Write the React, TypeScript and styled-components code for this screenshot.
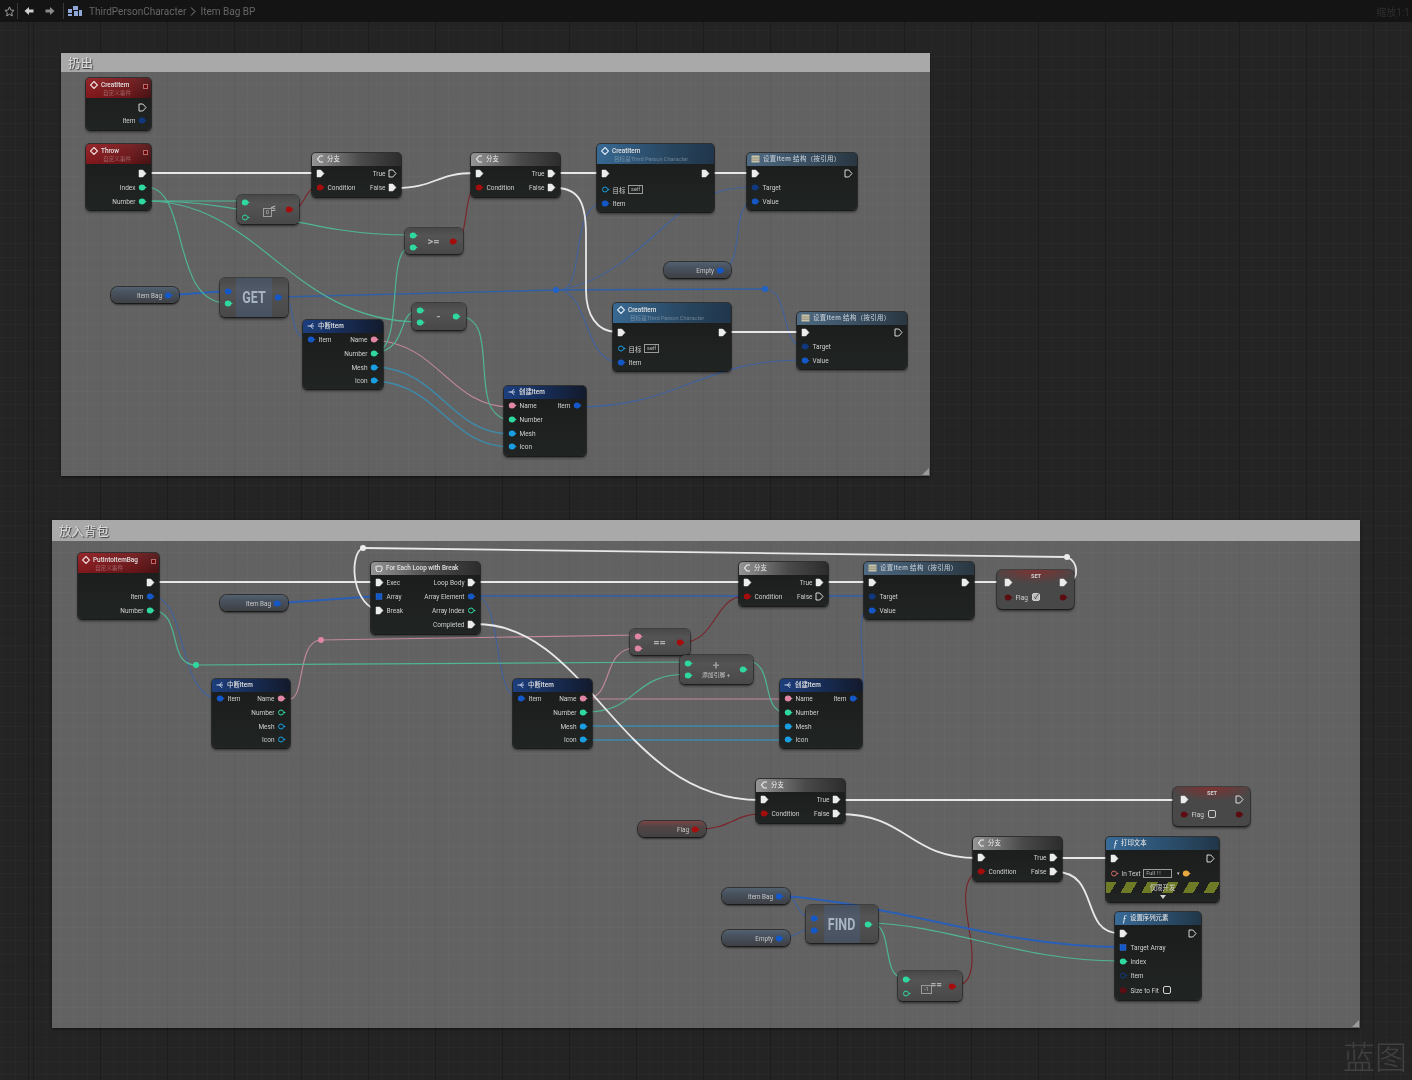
import React from 'react';
import styled, { createGlobalStyle, css } from 'styled-components';

const TOP = 22;
const FONT = `Roboto, "Noto Sans CJK SC", sans-serif`;

const GlobalStyle = createGlobalStyle`
  html, body { margin: 0; padding: 0; background: #222; }
  body { font-family: ${FONT}; overflow: hidden; }
`;

/* ---------- page shell ---------- */
const Page = styled.div`
  display: flex;
  flex-direction: column;
  width: 1412px;
  height: 1080px;
  filter: blur(0.5px);
`;
const Toolbar = styled.header`
  display: flex;
  align-items: center;
  height: 22px;
  flex: none;
  padding: 0 0 0 4px;
  background: #141414;
  color: #666;
  font-size: 10px;
`;
const Slot = styled.span<{ $ml: number }>`
  display: flex;
  align-items: center;
  gap: 4px;
  margin-left: ${p => p.$ml}px;
`;
const ToolDivider = styled.span`
  width: 1px;
  height: 16px;
  background: #3a3a3a;
`;
const ZoomLabel = styled.span`
  margin-left: auto;
  margin-right: 2px;
  font-size: 10px;
  color: #2e2e2e;
`;
const Canvas = styled.main`
  position: relative;
  flex: 1;
  overflow: hidden;
  background-color: #242424;
  background-image:
    repeating-linear-gradient(90deg, rgba(0, 0, 0, 0.3) 0 1px, transparent 1px 67px),
    repeating-linear-gradient(0deg, rgba(0, 0, 0, 0.16) 0 1px, transparent 1px 67px),
    repeating-linear-gradient(90deg, rgba(255, 255, 255, 0.02) 0 1px, transparent 1px 13.4px),
    repeating-linear-gradient(0deg, rgba(255, 255, 255, 0.02) 0 1px, transparent 1px 13.4px);
  background-position: 33px 0, 0 22px, 33px 0, 0 22px;
`;
const Watermark = styled.div`
  position: absolute;
  right: 5px;
  bottom: 2px;
  font-size: 32px;
  font-weight: 300;
  color: rgba(255, 255, 255, 0.13);
  font-family: "Noto Sans CJK SC", sans-serif;
`;

/* ---------- comment boxes ---------- */
const Comment = styled.section<{ $x: number; $y: number; $w: number; $h: number }>`
  position: absolute;
  left: ${p => p.$x}px;
  top: ${p => p.$y - TOP}px;
  width: ${p => p.$w}px;
  height: ${p => p.$h}px;
  background: rgba(255, 255, 255, 0.285);
  box-shadow: 0 1px 3px rgba(0, 0, 0, 0.55);
`;
const CommentTitle = styled.h2<{ $h: number }>`
  margin: 0;
  height: ${p => p.$h}px;
  line-height: ${p => p.$h + 2}px;
  padding-left: 7px;
  background: #a9a9a9;
  color: #dcdcdc;
  font-size: 12.5px;
  font-weight: 400;
  text-shadow: 1px 1px 1px #3a3a3a;
`;
const Grip = styled.svg`
  position: absolute;
  right: 1px;
  bottom: 1px;
`;

/* ---------- wires ---------- */
const WireLayer = styled.svg`
  position: absolute;
  left: 0;
  top: 0;
`;

/* ---------- full nodes ---------- */
const Node = styled.article<{ $x: number; $y: number; $w: number; $h: number }>`
  position: absolute;
  left: ${p => p.$x}px;
  top: ${p => p.$y - TOP}px;
  width: ${p => p.$w}px;
  height: ${p => p.$h}px;
  box-sizing: border-box;
  display: flex;
  flex-direction: column;
  border-radius: 4px;
  background: linear-gradient(#1a1c1b, #202423);
  box-shadow: 0 0 0 1px rgba(0, 0, 0, 0.5), 0 2px 3px rgba(0, 0, 0, 0.55);
  color: #cfcfcf;
  font-size: 6.5px;
  overflow: hidden;
`;
type Tone = 'event' | 'branch' | 'func' | 'struct' | 'set' | 'print';
const toneBg: Record<Tone, ReturnType<typeof css>> = {
  event: css`background: linear-gradient(rgba(255, 255, 255, 0.06), rgba(0, 0, 0, 0.1)), linear-gradient(90deg, #8f1a1f, #6f171a 70%, #4e1416);`,
  branch: css`background: linear-gradient(90deg, #959595, #4a4a4a 55%, #2c2c2c);`,
  func: css`background: linear-gradient(100deg, #386a94, #284660 60%, #20354a);`,
  struct: css`background: linear-gradient(90deg, #1d3f7e, #152545 70%, #131a2c);`,
  set: css`background: linear-gradient(90deg, #4f6a82, #344757 70%, #293640);`,
  print: css`background: linear-gradient(90deg, #386b98, #2a4c68 60%, #213648);`,
};
const Header = styled.div<{ $tone: Tone; $h: number }>`
  position: relative;
  flex: none;
  height: ${p => p.$h}px;
  display: flex;
  align-items: flex-start;
  gap: 3px;
  padding: ${p => (p.$h > 15 ? 3 : 2)}px 4px 0;
  box-sizing: border-box;
  ${p => toneBg[p.$tone]}
`;
const HeaderText = styled.div`
  display: flex;
  flex-direction: column;
  gap: 1px;
  min-width: 0;
`;
const Title = styled.span<{ $dim?: boolean }>`
  font-size: 6.4px;
  line-height: 8px;
  font-weight: 500;
  letter-spacing: ${p => (p.$dim ? 0.4 : 0)}px;
  color: ${p => (p.$dim ? '#bcc6cf' : '#e0e0e0')};
  white-space: nowrap;
`;
const Subtitle = styled.span`
  font-size: 5.6px;
  line-height: 7px;
  color: rgba(255, 255, 255, 0.3);
  white-space: nowrap;
  padding-left: 2px;
`;
const Delegate = styled.i`
  position: absolute;
  right: 3px;
  top: 6px;
  width: 3px;
  height: 3px;
  border: 1px solid #b86a6a;
  background: #6a0808;
`;
const Body = styled.div<{ $pad: number }>`
  display: flex;
  flex-direction: column;
  padding-top: ${p => p.$pad}px;
`;
const Row = styled.div<{ $h: number }>`
  display: flex;
  justify-content: space-between;
  align-items: center;
  height: ${p => p.$h}px;
  padding: 0 4px;
  white-space: nowrap;
`;
const Cell = styled.div`
  display: flex;
  align-items: center;
  gap: 2.5px;
`;
const Label = styled.span`
  padding-top: 1px;
`;
const Literal = styled.span<{ $w?: number }>`
  border: 1px solid #9a9a9a;
  padding: 0 2px;
  min-width: ${p => p.$w ?? 0}px;
  font-size: 5.6px;
  line-height: 7px;
  color: #b8b8b8;
`;
const Caret = styled.span`
  font-size: 5px;
  margin-left: 2px;
  color: #ccc;
`;
const Check = styled.span<{ $on?: boolean }>`
  display: inline-flex;
  align-items: center;
  justify-content: center;
  box-sizing: border-box;
  width: 8px;
  height: 8px;
  margin-left: 2px;
  border: 1px solid #d0d0d0;
  border-radius: 2px;
  font-size: 7px;
  line-height: 1;
  color: #333;
  background: ${p => (p.$on ? '#bdbdbd' : 'transparent')};
`;
const DevBand = styled.div`
  display: flex;
  align-items: center;
  justify-content: center;
  height: 11px;
  margin-top: 2px;
  color: #d0d0d0;
  font-size: 6.4px;
  background: repeating-linear-gradient(120deg, #6f7a26 0 9px, #1d201e 9px 18px);
`;
const DevArrow = styled.div`
  width: 0;
  height: 0;
  margin: 2px auto 0;
  border: 3px solid transparent;
  border-top: 4px solid #d0d0d0;
  border-bottom: 0;
`;

/* ---------- compact (pure) nodes ---------- */
const Compact = styled.article<{ $x: number; $y: number; $w: number; $h: number }>`
  position: absolute;
  left: ${p => p.$x}px;
  top: ${p => p.$y - TOP}px;
  width: ${p => p.$w}px;
  height: ${p => p.$h}px;
  box-sizing: border-box;
  display: flex;
  align-items: center;
  justify-content: space-between;
  padding: 0 5px 0 4px;
  border-radius: 5px;
  background: linear-gradient(#484848, #545454 30%, #484848);
  box-shadow: 0 0 0 1px rgba(0, 0, 0, 0.35), 0 2px 3px rgba(0, 0, 0, 0.6);
  color: #c8c8c8;
  overflow: hidden;
`;
const PinColumn = styled.div<{ $gap?: number }>`
  display: flex;
  flex-direction: column;
  gap: ${p => p.$gap ?? 3}px;
`;
const Center = styled.div`
  flex: 1;
  display: flex;
  flex-direction: column;
  align-items: center;
  justify-content: center;
  min-width: 0;
  height: 100%;
`;
const Glyph = styled.span<{ $size?: number }>`
  font-size: ${p => p.$size ?? 11}px;
  line-height: 1;
  font-weight: 700;
  color: #b0b0b0;
`;
const Mega = styled.span`
  display: flex;
  align-items: center;
  justify-content: center;
  width: 36px;
  height: 100%;
  background: rgba(70, 110, 165, 0.26);
`;
const MegaText = styled.span`
  display: inline-block;
  font-size: 16px;
  font-weight: 700;
  color: #a8b4c2;
  transform: scaleX(0.78);
`;
const LiteralGlyph = styled.div`
  display: flex;
  align-items: flex-start;
  padding-left: 4px;
`;
const LiteralLow = styled(Literal)`
  margin-top: 6px;
`;
const GlyphHigh = styled(Glyph)`
  margin-left: -1px;
  margin-top: 1px;
`;
const SmallCaption = styled.span`
  font-size: 5.8px;
  line-height: 8px;
  color: #c4c4c4;
  white-space: nowrap;
`;
const Plus = styled.span`
  font-size: 12px;
  line-height: 10px;
  font-weight: 700;
  color: #9a9a9a;
`;

/* ---------- SET node ---------- */
const SetNode = styled.article<{ $x: number; $y: number; $w: number; $h: number }>`
  position: absolute;
  left: ${p => p.$x}px;
  top: ${p => p.$y - TOP}px;
  width: ${p => p.$w}px;
  height: ${p => p.$h}px;
  box-sizing: border-box;
  display: flex;
  flex-direction: column;
  gap: 3px;
  padding: 6px 6px 0 7px;
  border-radius: 5px;
  background: radial-gradient(ellipse 60% 14px at 50% 0, rgba(150, 40, 40, 0.7), transparent), #484848;
  box-shadow: 0 0 0 1px rgba(0, 0, 0, 0.35), 0 2px 3px rgba(0, 0, 0, 0.6);
  color: #d0d0d0;
  font-size: 6.5px;
`;
const SetRow = styled.div`
  display: flex;
  align-items: center;
  justify-content: space-between;
  height: 12px;
`;
const SetLabel = styled.span`
  align-self: flex-start;
  margin-top: -3px;
  font-size: 5.6px;
  font-weight: 700;
`;

/* ---------- variable pills ---------- */
const VarPill = styled.article<{ $x: number; $y: number; $w: number; $red?: boolean }>`
  position: absolute;
  left: ${p => p.$x}px;
  top: ${p => p.$y - TOP}px;
  width: ${p => p.$w}px;
  height: 16px;
  box-sizing: border-box;
  display: flex;
  align-items: center;
  justify-content: flex-end;
  gap: 2px;
  padding-right: 6px;
  border-radius: 7px;
  background: ${p =>
    p.$red
      ? 'linear-gradient(#7c4444, #524545 35%, #414141)'
      : 'linear-gradient(#52606f, #48525e 35%, #3e4044)'};
  box-shadow: 0 0 0 1px rgba(0, 0, 0, 0.5), 0 2px 2px rgba(0, 0, 0, 0.5);
  color: #c8c8c8;
  font-size: 6.3px;
`;

/* ---------- icons ---------- */
type PinSpec = { k?: 'exec' | 'data' | 'array'; c?: string; o?: boolean };
const C = {
  white: '#ececec',
  bool: '#a50d0d',
  int: '#2fd8a0',
  name: '#df86a6',
  obj: '#199ee2',
  item: '#1458c8',
  itemDark: '#10387f',
  boolDark: '#5c0d12',
  orange: '#e8a840',
};
const PinBox = styled.svg`
  flex: none;
  display: block;
`;
function Pin({ k = 'data', c = C.item, o }: PinSpec) {
  if (k === 'exec')
    return (
      <PinBox width="9" height="9" viewBox="0 0 9 9">
        <path
          d="M1 1 H4.8 L8 4.5 L4.8 8 H1 Z"
          fill={o ? 'none' : C.white}
          stroke={C.white}
          strokeWidth={o ? 0.9 : 0.5}
          strokeLinejoin="round"
        />
      </PinBox>
    );
  if (k === 'array')
    return (
      <PinBox width="9" height="9" viewBox="0 0 9 9">
        <rect x="1" y="1.5" width="6" height="6" fill={c} stroke="#3a74d8" strokeWidth="0.4" />
      </PinBox>
    );
  return (
    <PinBox width="9" height="9" viewBox="0 0 9 9">
      {o ? (
        <circle cx="4" cy="4.5" r="2.5" fill="none" stroke={c} strokeWidth="1" />
      ) : (
        <ellipse cx="4" cy="4.5" rx="3.2" ry="2.9" fill={c} />
      )}
      <path d="M7 3.4 L8.8 4.5 L7 5.6 Z" fill={c} />
    </PinBox>
  );
}
function HeadIcon({ tone }: { tone: Tone }) {
  if (tone === 'event')
    return (
      <PinBox width="8" height="8" viewBox="0 0 8 8">
        <path d="M4 0.5 L7.5 4 L4 7.5 L0.5 4 Z" fill="none" stroke="#f0e0e0" strokeWidth="1.1" />
      </PinBox>
    );
  if (tone === 'func')
    return (
      <PinBox width="8" height="8" viewBox="0 0 8 8">
        <path d="M4 0.5 L7.5 4 L4 7.5 L0.5 4 Z" fill="none" stroke="#e0e8f0" strokeWidth="1.1" />
      </PinBox>
    );
  if (tone === 'branch')
    return (
      <PinBox width="8" height="8" viewBox="0 0 8 8">
        <path d="M7 1 H4 L1.5 4 L4 7 H7" fill="none" stroke="#f0f0f0" strokeWidth="1.1" />
      </PinBox>
    );
  if (tone === 'struct')
    return (
      <PinBox width="8" height="8" viewBox="0 0 8 8">
        <path d="M0.5 4 H3.5 M3.5 4 L6 1.2 M3.5 4 H7 M3.5 4 L6 6.8" fill="none" stroke="#dfe6f5" strokeWidth="0.9" />
      </PinBox>
    );
  if (tone === 'set')
    return (
      <PinBox width="9" height="8" viewBox="0 0 9 8">
        <rect x="0.5" y="0.5" width="8" height="7" fill="#c8c4aa" />
        <path d="M0.5 3 H8.5 M0.5 5.2 H8.5" stroke="#6b6a5c" strokeWidth="0.6" />
      </PinBox>
    );
  return null;
}
const FuncMark = styled.span`
  padding-left: 3px;
  font-family: "Liberation Serif", serif;
  font-style: italic;
  font-size: 10px;
  line-height: 9px;
  color: #e8eef5;
`;
function LoopIcon() {
  return (
    <PinBox width="8" height="8" viewBox="0 0 8 8">
      <path d="M1.5 2.2 H6.5 A1 1 0 0 1 7 3 V5 A2.6 2.6 0 0 1 1 5 V2.2" fill="none" stroke="#f0f0f0" strokeWidth="1" />
    </PinBox>
  );
}

/* ---------- data ---------- */
const ex: PinSpec = { k: 'exec' };
const exO: PinSpec = { k: 'exec', o: true };
const d = (c: string, o?: boolean): PinSpec => ({ c, o });
type CellDef = { pin?: PinSpec; label?: string; lit?: string; litW?: number; caret?: boolean; after?: PinSpec; check?: 'on' | 'off' };
type RowDef = { l?: CellDef; r?: CellDef; h?: number };
type NodeDef = {
  x: number; y: number; w: number; h: number;
  tone: Tone; title: string; sub?: string; rows: RowDef[]; rowH?: number;
  pad?: number; head?: number; dev?: boolean; delegate?: boolean;
};

const breakRows = (hollow: boolean): RowDef[] => [
  { l: { pin: d(C.item), label: 'Item' }, r: { label: 'Name', pin: d(C.name) } },
  { r: { label: 'Number', pin: d(C.int, hollow) } },
  { r: { label: 'Mesh', pin: d(C.obj, hollow) } },
  { r: { label: 'Icon', pin: d(C.obj, hollow) } },
];
const makeRows: RowDef[] = [
  { l: { pin: d(C.name), label: 'Name' }, r: { label: 'Item', pin: d(C.item) } },
  { l: { pin: d(C.int), label: 'Number' } },
  { l: { pin: d(C.obj), label: 'Mesh' } },
  { l: { pin: d(C.obj), label: 'Icon' } },
];
const branch = (x: number, y: number, tO: boolean, fO: boolean): NodeDef => ({
  x, y, w: 89, h: 44, tone: 'branch', title: '分支',
  rows: [
    { l: { pin: ex }, r: { label: 'True', pin: tO ? exO : ex } },
    { l: { pin: d(C.bool), label: 'Condition' }, r: { label: 'False', pin: fO ? exO : ex } },
  ],
});
const setItem = (x: number, y: number, out: PinSpec): NodeDef => ({
  x, y, w: 110, h: 57, tone: 'set', title: '设置Item 结构（按引用）',
  rows: [
    { l: { pin: ex }, r: { pin: out } },
    { l: { pin: d(C.itemDark), label: 'Target' } },
    { l: { pin: d(C.item), label: 'Value' } },
  ],
});
const creatFn = (x: number, y: number, w: number): NodeDef => ({
  x, y, w, h: 68, tone: 'func', title: 'CreatItem', sub: '目标是Third Person Character', pad: 2, head: 20,
  rows: [
    { l: { pin: ex }, r: { pin: ex } },
    { h: 18, l: { pin: d(C.obj, true), label: '目标', lit: 'self' } },
    { h: 10, l: { pin: d(C.item), label: 'Item' } },
  ],
});

const NODES: NodeDef[] = [
  { x: 86, y: 78, w: 65, h: 52, tone: 'event', title: 'CreatItem', sub: '自定义事件', head: 20, pad: 2, delegate: true,
    rows: [{ r: { pin: exO } }, { h: 13, r: { label: 'Item', pin: d(C.itemDark) } }] },
  { x: 86, y: 144, w: 65, h: 66, tone: 'event', title: 'Throw', sub: '自定义事件', head: 20, pad: 2, delegate: true,
    rows: [{ r: { pin: ex } }, { r: { label: 'Index', pin: d(C.int) } }, { r: { label: 'Number', pin: d(C.int) } }] },
  branch(312, 153, true, false),
  branch(471, 153, false, false),
  creatFn(597, 144, 117),
  setItem(747, 153, exO),
  creatFn(613, 303, 118),
  setItem(797, 312, exO),
  { x: 303, y: 320, w: 80, h: 69, tone: 'struct', title: '中断Item', rows: breakRows(false), rowH: 13.7 },
  { x: 504, y: 386, w: 82, h: 70, tone: 'struct', title: '创建Item', rows: makeRows, rowH: 13.7 },

  { x: 78, y: 553, w: 81, h: 66, tone: 'event', title: 'PutIntoItemBag', sub: '自定义事件', head: 20, pad: 2, delegate: true,
    rows: [{ r: { pin: ex } }, { r: { label: 'Item', pin: d(C.item) } }, { r: { label: 'Number', pin: d(C.int) } }] },
  { x: 371, y: 562, w: 109, h: 72, tone: 'branch', title: 'For Each Loop with Break',
    rows: [
      { l: { pin: ex, label: 'Exec' }, r: { label: 'Loop Body', pin: ex } },
      { l: { pin: { k: 'array', c: C.item }, label: 'Array' }, r: { label: 'Array Element', pin: d(C.item) } },
      { l: { pin: ex, label: 'Break' }, r: { label: 'Array Index', pin: d(C.int, true) } },
      { r: { label: 'Completed', pin: ex } },
    ] },
  { x: 212, y: 679, w: 78, h: 69, tone: 'struct', title: '中断Item', rows: breakRows(true), rowH: 13.7 },
  { x: 513, y: 679, w: 79, h: 69, tone: 'struct', title: '中断Item', rows: breakRows(false), rowH: 13.7 },
  { x: 780, y: 679, w: 82, h: 69, tone: 'struct', title: '创建Item', rows: makeRows, rowH: 13.7 },
  branch(739, 562, false, true),
  setItem(864, 562, ex),
  branch(756, 779, false, false),
  branch(973, 837, false, false),
  { x: 1106, y: 837, w: 113, h: 65, tone: 'print', title: '打印文本', dev: true,
    rows: [
      { h: 16, l: { pin: ex }, r: { pin: exO } },
      { l: { pin: d('#c96a6a', true), label: 'In Text', lit: 'Full ! !', litW: 23, caret: true, after: d(C.orange) } },
    ] },
  { x: 1115, y: 912, w: 86, h: 88, tone: 'print', title: '设置序列元素', pad: 1,
    rows: [
      { l: { pin: ex }, r: { pin: exO } },
      { l: { pin: { k: 'array', c: C.item }, label: 'Target Array' } },
      { l: { pin: d(C.int), label: 'Index' } },
      { l: { pin: d(C.itemDark, true), label: 'Item' } },
      { h: 16, l: { pin: d(C.boolDark), label: 'Size to Fit', check: 'off' } },
    ] },
];

const VARS = [
  { x: 664, y: 262, w: 67, label: 'Empty', c: C.item },
  { x: 111, y: 287, w: 68, label: 'Item Bag', c: C.item },
  { x: 220, y: 595, w: 68, label: 'Item Bag', c: C.item },
  { x: 638, y: 821, w: 68, label: 'Flag', c: C.bool, red: true },
  { x: 722, y: 888, w: 68, label: 'Item Bag', c: C.item },
  { x: 722, y: 930, w: 68, label: 'Empty', c: C.item },
];

const SETS = [
  { x: 997, y: 570, w: 77, h: 39, on: true, out: ex },
  { x: 1173, y: 787, w: 77, h: 39, on: false, out: exO },
];

/* ---------- wire helpers ---------- */
const b = (x1: number, y1: number, x2: number, y2: number, t?: number) => {
  const k = t ?? Math.max(Math.abs(x2 - x1) * 0.5, 14);
  return `M${x1} ${y1} C${x1 + k} ${y1} ${x2 - k} ${y2} ${x2} ${y2}`;
};
const WHITE = [
  `M147 173 L316 173`,
  b(396, 188, 475, 173),
  `M555 173 L601 173`,
  `M709 173 L751 173`,
  `M556 188 C580 188 586 205 586 235 L586 290 C586 315 597 332 617 332`,
  `M725 332 L801 332`,
  `M155 582 L375 582`,
  `M475 582 L743 582`,
  `M823 582 L868 582`,
  `M969 582 L1004 582`,
  `M1067 557 C1078 562 1080 578 1068 583`,
  `M1067 557 L363 548`,
  `M363 548 C350 552 350 600 376 610`,
  `M476 624 C590 624 620 800 760 800`,
  `M839 800 L1179 800`,
  b(839, 814, 977, 858),
  `M1056 858 L1110 858`,
  `M1056 872 C1100 872 1080 933 1119 933`,
];
const TEAL = [
  `M146 187 C190 187 170 303 227 303`,
  `M146 201 L243 201`,
  `M146 201 C260 201 290 322 421 322`,
  `M146 201 C260 201 300 235 411 235`,
  `M376 353 C405 345 385 247 411 247`,
  `M376 353 C410 348 395 310 421 310`,
  `M457 316 C490 316 480 360 487 395 C490 412 500 420 511 420`,
  `M150 610 C185 610 165 665 196 665`,
  `M196 665 L688 662`,
  `M585 712 C640 712 630 674 688 674`,
  `M747 661 C775 661 760 712 785 712`,
  `M870 923 C950 925 1020 961 1119 961`,
  `M870 923 C895 923 880 978 904 978`,
];
const PINK = [
  `M376 340 C440 345 450 407 511 407`,
  `M290 699 C305 699 297 640 321 640`,
  `M321 640 L638 635`,
  `M585 699 C615 699 600 648 636 648`,
  `M585 699 L785 699`,
];
const CYAN = [
  `M376 367 C440 370 450 434 511 434`,
  `M376 381 C440 385 450 447 511 447`,
  `M585 726 L785 726`,
  `M585 740 L785 740`,
];
const BLUE = [
  `M290 303 C293 320 295 335 304 338`,
  `M560 290 C620 280 660 225 690 205 C710 192 730 187 753 187`,
  `M562 290 C585 285 570 205 603 203`,
  `M562 290 C590 300 585 362 619 362`,
  `M722 270 C745 265 730 205 753 201`,
  `M765 289 C790 289 780 346 803 346`,
  `M577 407 C680 407 700 360 803 360`,
  `M150 596 C190 596 175 699 221 699`,
  `M474 596 C505 596 490 699 521 699`,
  `M855 699 C875 699 850 612 868 610`,
  `M784 896 C800 896 795 917 811 917`,
  `M782 938 C795 938 800 929 811 929`,
];
const BLUE_MID = [`M280 297 L556 290 L765 289`, `M474 596 L739 596`, `M828 596 L868 596`];
const BLUE_THICK = [`M172 295 L228 291`, `M280 603 L379 596`, `M784 896 C900 905 1000 947 1119 947`];
const RED = [
  `M292 209 C305 209 305 187 318 187`,
  `M455 241 C470 241 462 187 478 187`,
  `M684 642 C715 642 715 596 745 596`,
  `M699 829 C730 829 735 814 760 814`,
  `M954 986 C972 986 975 965 970 935 C966 910 960 880 977 872`,
];
const KNOTS = [
  { x: 556, y: 290, c: '#1f63c8' },
  { x: 765, y: 289, c: '#1f63c8' },
  { x: 363, y: 548, c: C.white },
  { x: 1067, y: 557, c: C.white },
  { x: 196, y: 665, c: C.int },
  { x: 321, y: 640, c: C.name },
];

function Wires() {
  const group = (paths: string[], color: string, width: number) => (
    <g fill="none" stroke={color} strokeWidth={width}>
      {paths.map(p => (
        <path key={p} d={p} />
      ))}
    </g>
  );
  return (
    <WireLayer width="1412" height="1058" viewBox={`0 ${TOP} 1412 1058`}>
      {group(RED, '#7a2229', 1.1)}
      {group(PINK, '#c4899f', 1.1)}
      {group(CYAN, '#3d8aab', 1.5)}
      {group(BLUE, '#3f629f', 1.1)}
      {group(BLUE_MID, '#2f5fa8', 1.4)}
      {group(BLUE_THICK, '#2a5fb8', 2)}
      {group(TEAL, '#4fb596', 1.2)}
      {group(WHITE, '#e8e8e8', 1.8)}
      {KNOTS.map(k => (
        <circle key={`${k.x}-${k.y}`} cx={k.x} cy={k.y} r="3" fill={k.c} />
      ))}
    </WireLayer>
  );
}

/* ---------- renderers ---------- */
function CellView({ c, right }: { c: CellDef; right?: boolean }) {
  return (
    <Cell>
      {!right && c.pin && <Pin {...c.pin} />}
      {c.label && <Label>{c.label}</Label>}
      {c.lit && <Literal $w={c.litW}>{c.lit}</Literal>}
      {c.caret && <Caret>▾</Caret>}
      {c.after && <Pin {...c.after} />}
      {c.check && <Check $on={c.check === 'on'} />}
      {right && c.pin && <Pin {...c.pin} />}
    </Cell>
  );
}
function FullNode({ n }: { n: NodeDef }) {
  const head = n.head ?? 13;
  return (
    <Node $x={n.x} $y={n.y} $w={n.w} $h={n.h}>
      <Header $tone={n.tone} $h={head}>
        {n.tone === 'print' ? (
          <FuncMark>ƒ</FuncMark>
        ) : n.title.startsWith('For Each') ? (
          <LoopIcon />
        ) : (
          <HeadIcon tone={n.tone} />
        )}
        <HeaderText>
          <Title $dim={n.tone === 'set'}>{n.title}</Title>
          {n.sub && <Subtitle>{n.sub}</Subtitle>}
        </HeaderText>
        {n.delegate && <Delegate />}
      </Header>
      <Body $pad={n.pad ?? 0}>
        {n.rows.map((r, i) => (
          <Row key={i} $h={r.h ?? n.rowH ?? 14}>
            <span>{r.l && <CellView c={r.l} />}</span>
            <span>{r.r && <CellView c={r.r} right />}</span>
          </Row>
        ))}
      </Body>
      {n.dev && (
        <>
          <DevBand>仅限开发</DevBand>
          <DevArrow />
        </>
      )}
    </Node>
  );
}

const Grips = () => (
  <Grip width="7" height="7" viewBox="0 0 7 7">
    <path d="M7 0 V7 H0 Z" fill="#9a9a9a" />
  </Grip>
);

export default function App() {
  return (
    <Page>
      <GlobalStyle />
      <Toolbar>
        <Slot $ml={0}>
          <PinBox width="11" height="11" viewBox="0 0 12 12">
            <path d="M6 1 L7.5 4.4 L11 4.8 L8.4 7.2 L9.1 10.8 L6 9 L2.9 10.8 L3.6 7.2 L1 4.8 L4.5 4.4 Z" fill="none" stroke="#a8a8a8" strokeWidth="1" />
          </PinBox>
        </Slot>
        <Slot $ml={2}><ToolDivider /></Slot>
        <Slot $ml={6}>
          <PinBox width="10" height="10" viewBox="0 0 10 10">
            <path d="M0.5 5 L5 1 V3.4 H9.5 V6.6 H5 V9 Z" fill="#d0d0d0" />
          </PinBox>
        </Slot>
        <Slot $ml={11}>
          <PinBox width="10" height="10" viewBox="0 0 10 10">
            <path d="M9.5 5 L5 1 V3.4 H0.5 V6.6 H5 V9 Z" fill="#8a8a8a" />
          </PinBox>
        </Slot>
        <Slot $ml={8}><ToolDivider /></Slot>
        <Slot $ml={4}>
          <PinBox width="14" height="11" viewBox="0 0 14 11">
            <path d="M5 0 H10 V4 H5 Z M0 3 H4 V7 H0 Z M6 5 H10 V10 H6 Z M11 4 H14 V10 H11 Z M0 8 H4 V10 H0 Z" fill="#8ea6d8" />
          </PinBox>
        </Slot>
        <Slot $ml={7}>
          <span>ThirdPersonCharacter</span>
          <PinBox width="6" height="9" viewBox="0 0 6 9">
            <path d="M1 0.5 L5 4.5 L1 8.5" fill="none" stroke="#8a8a8a" strokeWidth="1" />
          </PinBox>
          <span>Item Bag BP</span>
        </Slot>
        <ZoomLabel>缩放1:1</ZoomLabel>
      </Toolbar>

      <Canvas>
        <Comment $x={61} $y={53} $w={869} $h={423}>
          <CommentTitle $h={19}>扔出</CommentTitle>
          <Grips />
        </Comment>
        <Comment $x={52} $y={520} $w={1308} $h={508}>
          <CommentTitle $h={21}>放入背包</CommentTitle>
          <Grips />
        </Comment>

        <Wires />

        {NODES.map(n => (
          <FullNode key={`${n.x}-${n.y}`} n={n} />
        ))}

        {VARS.map(v => (
          <VarPill key={`${v.x}-${v.y}`} $x={v.x} $y={v.y} $w={v.w} $red={v.red}>
            <Label>{v.label}</Label>
            <Pin c={v.c} />
          </VarPill>
        ))}

        {SETS.map(s => (
          <SetNode key={s.x} $x={s.x} $y={s.y} $w={s.w} $h={s.h}>
            <SetRow>
              <Pin {...ex} />
              <SetLabel>SET</SetLabel>
              <Pin {...s.out} />
            </SetRow>
            <SetRow>
              <Cell>
                <Pin c={C.boolDark} />
                <Label>Flag</Label>
                <Check $on={s.on}>{s.on ? '✓' : ''}</Check>
              </Cell>
              <Pin c={C.boolDark} />
            </SetRow>
          </SetNode>
        ))}

        <Compact $x={237} $y={195} $w={62} $h={29}>
          <PinColumn $gap={6}><Pin c={C.int} /><Pin c={C.int} o /></PinColumn>
          <Center>
            <LiteralGlyph><LiteralLow>0</LiteralLow><GlyphHigh $size={10}>≤</GlyphHigh></LiteralGlyph>
          </Center>
          <Pin c={C.bool} />
        </Compact>
        <Compact $x={405} $y={228} $w={58} $h={26}>
          <PinColumn><Pin c={C.int} /><Pin c={C.int} /></PinColumn>
          <Center><Glyph>&gt;=</Glyph></Center>
          <Pin c={C.bool} />
        </Compact>
        <Compact $x={220} $y={278} $w={68} $h={39}>
          <PinColumn><Pin c={C.item} /><Pin c={C.int} /></PinColumn>
          <Center><Mega><MegaText>GET</MegaText></Mega></Center>
          <Pin c={C.item} />
        </Compact>
        <Compact $x={412} $y={303} $w={54} $h={27}>
          <PinColumn><Pin c={C.int} /><Pin c={C.int} /></PinColumn>
          <Center><Glyph>-</Glyph></Center>
          <Pin c={C.int} />
        </Compact>
        <Compact $x={630} $y={629} $w={60} $h={26}>
          <PinColumn><Pin c={C.name} /><Pin c={C.name} /></PinColumn>
          <Center><Glyph>==</Glyph></Center>
          <Pin c={C.bool} />
        </Compact>
        <Compact $x={680} $y={655} $w={73} $h={29}>
          <PinColumn><Pin c={C.int} /><Pin c={C.int} /></PinColumn>
          <Center><Plus>+</Plus><SmallCaption>添加引脚 +</SmallCaption></Center>
          <Pin c={C.int} />
        </Compact>
        <Compact $x={806} $y={905} $w={72} $h={38}>
          <PinColumn><Pin c={C.item} /><Pin c={C.item} /></PinColumn>
          <Center><Mega><MegaText>FIND</MegaText></Mega></Center>
          <Pin c={C.int} />
        </Compact>
        <Compact $x={898} $y={971} $w={64} $h={30}>
          <PinColumn $gap={5}><Pin c={C.int} /><Pin c={C.int} o /></PinColumn>
          <Center>
            <LiteralGlyph><LiteralLow>-1</LiteralLow><GlyphHigh $size={10}>==</GlyphHigh></LiteralGlyph>
          </Center>
          <Pin c={C.bool} />
        </Compact>

        <Watermark>蓝图</Watermark>
      </Canvas>
    </Page>
  );
}
